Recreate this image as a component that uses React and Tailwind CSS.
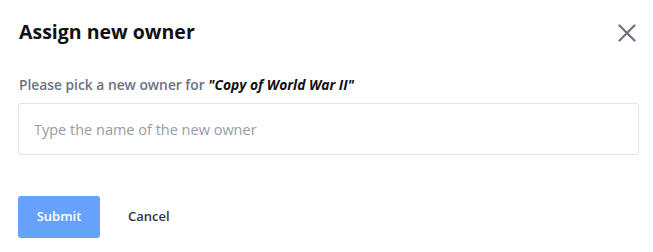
import React from 'react';

const App = () => {
  return (
    <div className="w-[653px] h-[252px] bg-white px-[18px] pt-[18px]" style={{ fontFamily: '"Open Sans", "Noto Sans", sans-serif' }}>
      <div className="flex items-start justify-between">
        <h2 className="text-[19.5px] font-bold text-[#111111] leading-[26px] ml-[1px] mt-[1px]">Assign new owner</h2>
        <button className="mt-[6px] mr-[-1px] text-[#6b7280]">
          <svg width="18" height="18" viewBox="0 0 18 18" fill="none" stroke="currentColor" strokeWidth="2.2" strokeLinecap="round">
            <path d="M1.5 1.5L16.5 16.5M16.5 1.5L1.5 16.5" />
          </svg>
        </button>
      </div>
      <p className="mt-[31px] text-[13.8px] font-semibold text-[#6b7280] leading-[18px] ml-[1px]">
        Please pick a new owner for{' '}
        <span className="italic font-bold text-[#111111]">"Copy of World War II"</span>
      </p>
      <input
        className="mt-[9px] w-[621px] h-[52px] border border-[#e1e3e8] rounded-[3px] px-[15px] text-[14.5px] outline-none placeholder:text-[#979ba3]"
        placeholder="Type the name of the new owner"
      />
      <div className="mt-[41px] flex items-center">
        <button className="w-[82px] h-[42px] bg-[#66a2fc] rounded-[3px] text-white text-[13px] font-semibold">Submit</button>
        <button className="ml-[28px] text-[13px] font-semibold text-[#2f3747]">Cancel</button>
      </div>
    </div>
  );
};

export default App;
